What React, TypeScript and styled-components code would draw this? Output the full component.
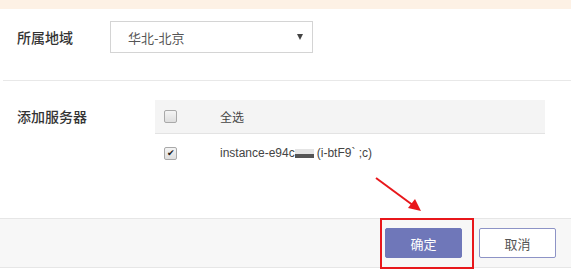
import styled, { createGlobalStyle } from 'styled-components';

const Global = createGlobalStyle`
	html, body {
		margin: 0;
		padding: 0;
		background: #fff;
	}
	body {
		font-family: "Liberation Sans", "Noto Sans CJK SC", sans-serif;
	}
`;

const Page = styled.div`
	position: relative;
	width: 571px;
	height: 269px;
	overflow: hidden;
	background: #fff;
`;

const Notice = styled.div`
	height: 9px;
	background: #fdf1e5;
`;

const Section = styled.div<{ $pad: number; $height: number }>`
	display: flex;
	align-items: flex-start;
	padding: ${(p) => p.$pad}px 0 0 17px;
	height: ${(p) => p.$height}px;
	box-sizing: border-box;
`;

const Label = styled.div<{ $line: number }>`
	width: 93px;
	flex: none;
	font-family: "Noto Sans CJK SC", sans-serif;
	font-size: 14px;
	font-weight: 500;
	color: #333;
	line-height: ${(p) => p.$line}px;
`;

const Select = styled.div`
	width: 203px;
	height: 32px;
	box-sizing: border-box;
	border: 1px solid #d4d4d4;
	display: flex;
	align-items: center;
	justify-content: space-between;
	padding: 0 9px 0 17px;
	font-family: "Noto Sans CJK SC", sans-serif;
	font-size: 13px;
	color: #555;
`;

const Caret = styled.span`
	width: 0;
	height: 0;
	border-left: 3.5px solid transparent;
	border-right: 3.5px solid transparent;
	border-top: 6px solid #444;
`;

const Divider = styled.div`
	height: 1px;
	margin-left: 3px;
	background: #e8e8e8;
`;

const Table = styled.div`
	width: 390px;
	margin-left: 45px;
	display: flex;
	flex-direction: column;
`;

const Row = styled.div<{ $head?: boolean }>`
	display: flex;
	align-items: center;
	height: ${(p) => (p.$head ? '34px' : '38px')};
	background: ${(p) => (p.$head ? '#f4f4f4' : '#fff')};
	border-bottom: ${(p) => (p.$head ? '1px solid #e3e3e3' : 'none')};
	box-sizing: border-box;
	padding-left: 9px;
	font-size: 12px;
	color: #444;
`;

const Box = styled.span<{ $checked?: boolean }>`
	width: 11px;
	height: 11px;
	flex: none;
	border: 1px solid #a9a9a9;
	border-radius: 2px;
	background: linear-gradient(#f4f4f4, #dedede);
	display: flex;
	align-items: center;
	justify-content: center;
	font-size: 9px;
	line-height: 1;
	color: #222;
	margin-right: 43px;
`;

const Cell = styled.span`
	font-family: "Noto Sans CJK SC", "Liberation Sans", sans-serif;
	font-size: 12px;
	color: #444;
`;

const Instance = styled.span`
	font-family: "Liberation Sans", sans-serif;
	font-size: 12px;
	color: #444;
	display: flex;
	align-items: center;
`;

const Blur = styled.span`
	display: inline-block;
	width: 19px;
	height: 9px;
	margin: 0 3px 0 0;
	background: linear-gradient(#e4e4e4 0 60%, #555 60% 100%);
	filter: blur(0.4px);
`;

const Footer = styled.div`
	position: absolute;
	left: 0;
	right: 0;
	top: 218px;
	height: 50px;
	background: #f7f7f7;
	border-top: 1px solid #e6e6e6;
	border-bottom: 1px solid #e6e6e6;
	box-sizing: border-box;
	display: flex;
	align-items: center;
	justify-content: flex-end;
	gap: 17px;
	padding: 0 15px 0 0;
`;

const Button = styled.button<{ $primary?: boolean }>`
	width: 77px;
	height: 30px;
	border-radius: 2px;
	font-family: "Noto Sans CJK SC", sans-serif;
	font-size: 13px;
	border: 1px solid ${(p) => (p.$primary ? '#6f77b9' : '#8d93c6')};
	background: ${(p) => (p.$primary ? '#6f77b9' : '#fff')};
	color: ${(p) => (p.$primary ? '#fff' : '#555')};
	padding: 0;
`;

const Highlight = styled.div`
	position: absolute;
	left: 380px;
	top: 218px;
	width: 90px;
	height: 47px;
	border: 2px solid #e8171b;
`;

const Arrow = styled.svg`
	position: absolute;
	left: 370px;
	top: 172px;
`;

export default function App() {
	return (
		<Page>
			<Global />
			<Notice />
			<Section $pad={12} $height={71}>
				<Label $line={32}>所属地域</Label>
				<Select>
					<span>华北-北京</span>
					<Caret />
				</Select>
			</Section>
			<Divider />
			<Section $pad={19} $height={137}>
				<Label $line={33}>添加服务器</Label>
				<Table>
					<Row $head>
						<Box />
						<Cell>全选</Cell>
					</Row>
					<Row>
						<Box $checked>✔</Box>
						<Instance>
							instance-e94c<Blur />(i-btF9`&nbsp;;c)
						</Instance>
					</Row>
				</Table>
			</Section>
			<Footer>
				<Button $primary>确定</Button>
				<Button>取消</Button>
			</Footer>
			<Highlight />
			<Arrow width="60" height="45" viewBox="0 0 60 45">
				<line x1="6" y1="6" x2="44" y2="34" stroke="#e8171b" strokeWidth="2" />
				<polygon points="51,39 38,36 45,27" fill="#e8171b" />
			</Arrow>
		</Page>
	);
}
